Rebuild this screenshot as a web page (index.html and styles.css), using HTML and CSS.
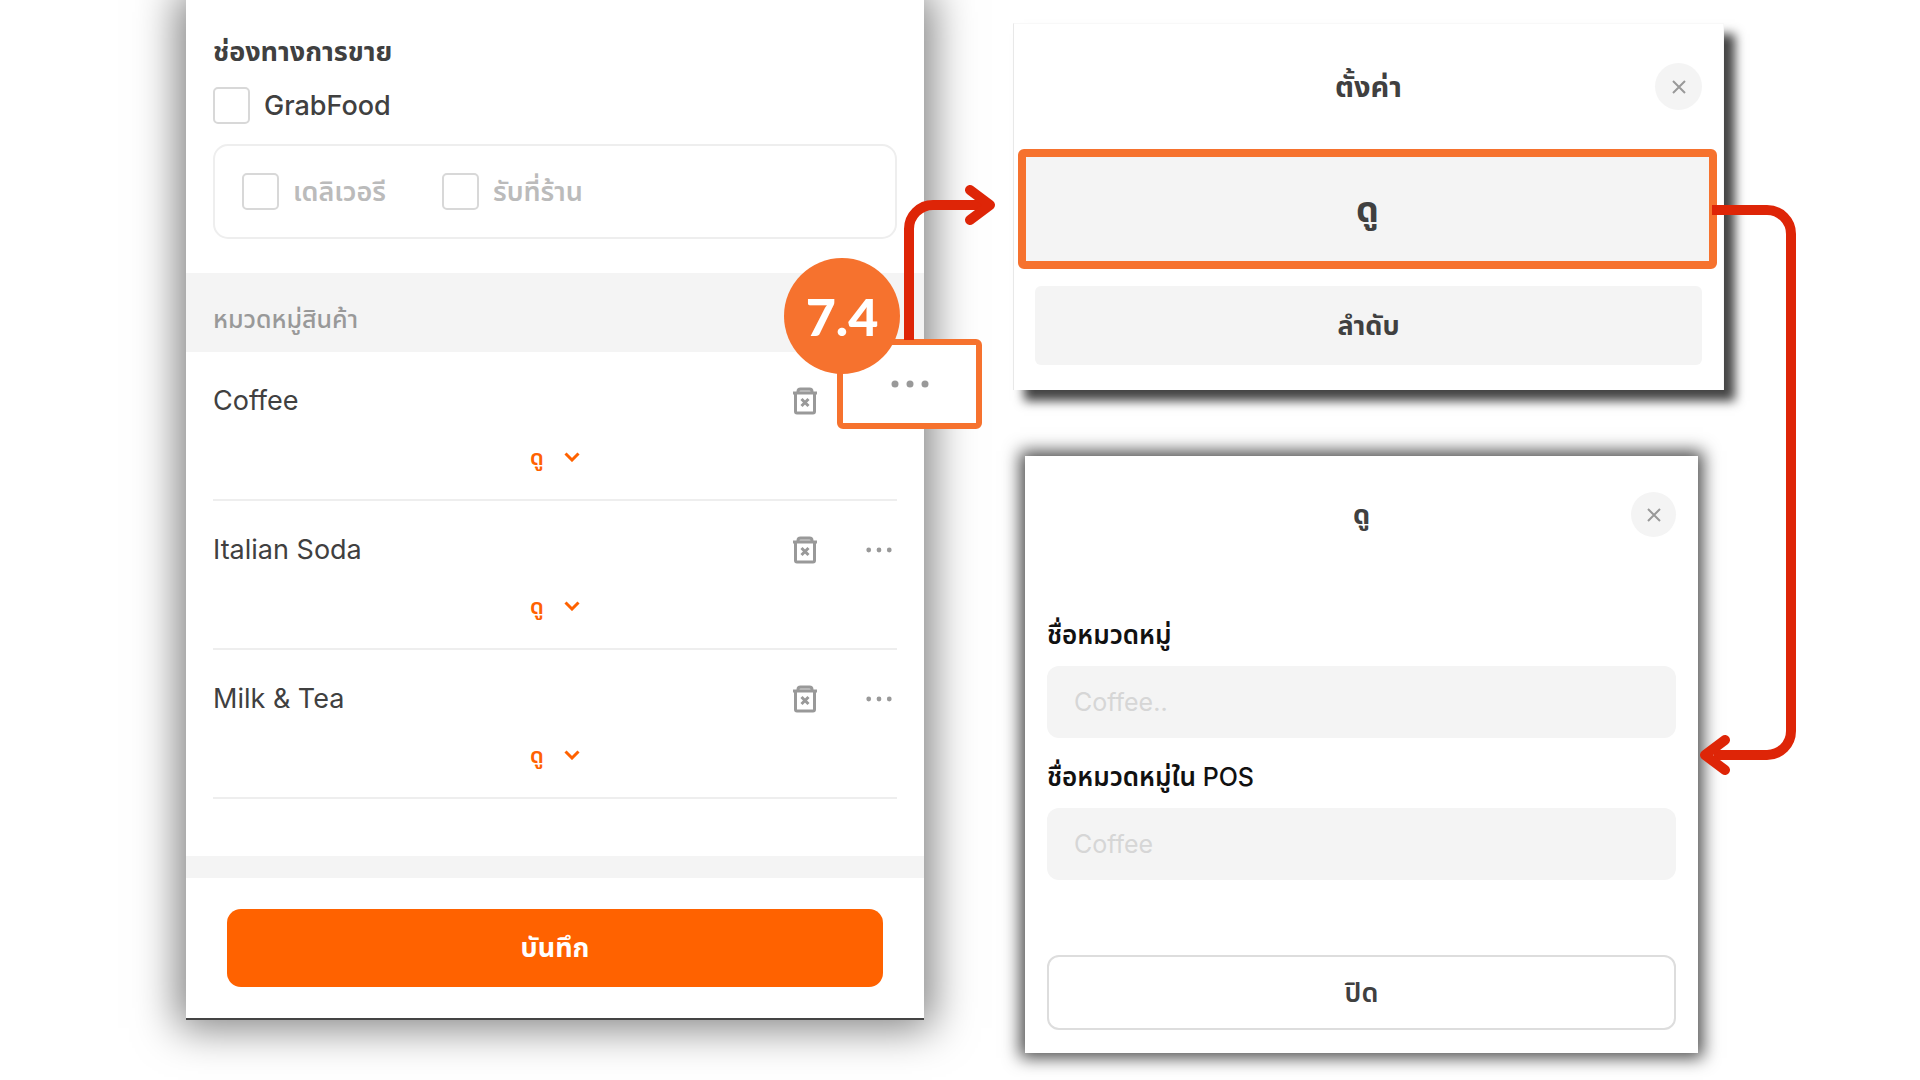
FILE: index.html
```html
<!DOCTYPE html>
<html lang="th">
<head>
<meta charset="utf-8">
<meta name="viewport" content="width=device-width, initial-scale=1">
<title>หมวดหมู่สินค้า</title>
<link rel="stylesheet" href="styles.css">
</head>
<body>
<svg class="sprite" aria-hidden="true">
  <symbol id="trash" viewBox="0 0 26 28">
    <path d="M6 6V4.500Q6 2 8.500 2H17.500Q20 2 20 4.500V6" fill="#d6d6d6"/>
    <path d="M1 6H25M3.500 6V24.500Q3.500 26 5 26H21Q22.500 26 22.500 24.500V6M9.500 12L16.500 19M16.500 12L9.500 19"/>
  </symbol>
  <symbol id="dots" viewBox="0 0 38 8"><circle cx="4" cy="4" r="3.500"/><circle cx="19" cy="4" r="3.500"/><circle cx="34" cy="4" r="3.500"/></symbol>
  <symbol id="chevron" viewBox="0 0 16 10"><path d="M1.500 1.500L8 8L14.500 1.500"/></symbol>
  <symbol id="close" viewBox="0 0 16 16"><path d="M2 2L14 14M14 2L2 14"/></symbol>
</svg>
<main class="board">
  <section class="card menu">
    <fieldset class="channels">
      <legend class="channels-title">ช่องทางการขาย</legend>
      <label class="check"><input type="checkbox">GrabFood</label>
      <div class="methods">
        <label class="check muted"><input type="checkbox">เดลิเวอรี</label>
        <label class="check muted"><input type="checkbox">รับที่ร้าน</label>
      </div>
    </fieldset>
    <h2 class="band">หมวดหมู่สินค้า</h2>
    <ul class="categories">
      <li class="category">
        <div class="category-head">
          <span class="name">Coffee</span>
          <button class="icon" aria-label="ลบ Coffee"><svg class="trash"><use href="#trash"/></svg></button>
          <span class="more-space"></span>
        </div>
        <button class="view">ดู<svg class="chevron"><use href="#chevron"/></svg></button>
        <button class="more-highlight" aria-label="ตัวเลือก Coffee"><svg class="dots large"><use href="#dots"/></svg></button>
        <svg class="arrow arrow-up" viewBox="0 0 96 156"><path class="shaft" d="M9 156V45A24 24 0 0 1 33 21H84"/><path d="M70 6L90 21L70 36"/></svg>
        <strong class="step">7.4</strong>
      </li>
      <li class="category">
        <div class="category-head">
          <span class="name">Italian Soda</span>
          <button class="icon" aria-label="ลบ Italian Soda"><svg class="trash"><use href="#trash"/></svg></button>
          <button class="icon more" aria-label="ตัวเลือก Italian Soda"><svg class="dots"><use href="#dots"/></svg></button>
        </div>
        <button class="view">ดู<svg class="chevron"><use href="#chevron"/></svg></button>
      </li>
      <li class="category">
        <div class="category-head">
          <span class="name">Milk &amp; Tea</span>
          <button class="icon" aria-label="ลบ Milk &amp; Tea"><svg class="trash"><use href="#trash"/></svg></button>
          <button class="icon more" aria-label="ตัวเลือก Milk &amp; Tea"><svg class="dots"><use href="#dots"/></svg></button>
        </div>
        <button class="view">ดู<svg class="chevron"><use href="#chevron"/></svg></button>
      </li>
    </ul>
    <div class="save-bar"><button class="save">บันทึก</button></div>
  </section>

  <div class="dialogs">
    <section class="card settings">
      <header class="dialog-head">
        <h2 class="dialog-title">ตั้งค่า</h2>
        <button class="close" aria-label="ปิด"><svg><use href="#close"/></svg></button>
      </header>
      <button class="option selected">ดู</button>
      <button class="option">ลำดับ</button>
    </section>
    <section class="card detail">
      <header class="dialog-head">
        <h2 class="dialog-title">ดู</h2>
        <button class="close small" aria-label="ปิด"><svg><use href="#close"/></svg></button>
      </header>
      <form class="fields">
        <label class="field-label" for="category-name">ชื่อหมวดหมู่</label>
        <input class="field" id="category-name" type="text" placeholder="Coffee..">
        <label class="field-label" for="pos-name">ชื่อหมวดหมู่ใน <span class="latin">POS</span></label>
        <input class="field" id="pos-name" type="text" placeholder="Coffee">
        <button class="dismiss" type="button">ปิด</button>
      </form>
    </section>
    <svg class="arrow arrow-down" viewBox="0 0 100 580"><path class="shaft" d="M14 10H69A24 24 0 0 1 93 34V531A24 24 0 0 1 69 555H16"/><path d="M27 540L7 555L27 570"/></svg>
  </div>
</main>
</body>
</html>
```
FILE: styles.css
```css
* { box-sizing: border-box; }
body {
  margin: 0;
  background: #fff;
  color: #404040;
  font-family: Inter, "Noto Sans Thai", "Noto Sans", sans-serif;
  font-size: 27px;
  line-height: 36px;
}
button, input { font: inherit; color: inherit; }
button { padding: 0; border: 0; background: none; cursor: pointer; }
h2 { margin: 0; font-size: 27px; line-height: 36px; }
svg { display: block; fill: none; stroke: currentColor; }
.sprite { position: absolute; width: 0; height: 0; }

.board {
  display: grid;
  grid-template-columns: 186fr 738fr 89fr 711fr 196fr;
  align-items: start;
  min-height: 100vh;
}
.card { background: #fff; }

/* Category list */
.menu {
  grid-column: 2;
  border-bottom: 2px solid #444;
  box-shadow: 0 0 40px 8px rgba(0, 0, 0, 0.5);
}
.channels {
  margin: 0;
  padding: 34px 27px;
  border: 0;
}
.channels-title { float: left; width: 100%; padding: 0; margin-bottom: 17px; font-weight: 700; }
.check { display: flex; align-items: center; gap: 14px; clear: both; font-weight: 500; }
.check input {
  appearance: none;
  width: 37px;
  height: 37px;
  margin: 0;
  border: 2px solid #d8d8d8;
  border-radius: 5px;
  background: #fff;
}
.methods {
  display: flex;
  gap: 56px;
  margin-top: 20px;
  padding: 27px;
  border: 2px solid #eee;
  border-radius: 15px;
}
.muted { color: #bbb; font-weight: 600; }
.band {
  padding: 28px 27px 15px;
  background: #f4f4f4;
  color: #999;
  font-size: 25px;
  font-weight: 500;
}
.categories { margin: 0; padding: 0 27px 57px; list-style: none; }
.category {
  position: relative;
  padding-top: 31px;
  border-bottom: 2px solid #eee;
}
.category-head { display: flex; align-items: center; }
.name { flex: 1; }
.icon { color: #999; }
.trash { width: 26px; height: 28px; stroke-width: 3; }
.more, .more-space { width: 36px; margin-left: 43px; }
.dots { width: 26px; height: 6px; margin: 0 auto; fill: #999; stroke: none; }
.dots.large { width: 38px; height: 8px; }
.view {
  display: flex;
  align-items: center;
  gap: 20px;
  height: 36px;
  margin: 20px auto 24px;
  color: #ff6200;
  font-size: 22px;
  font-weight: 600;
}
.chevron { width: 16px; height: 10px; stroke-width: 3; }
.save-bar { padding: 31px 41px; border-top: 22px solid #f4f4f4; }
.save {
  width: 100%;
  height: 78px;
  border-radius: 14px;
  background: #ff6200;
  color: #fff;
  font-weight: 700;
}

/* Callouts over the first category */
.more-highlight {
  position: absolute;
  top: -13px;
  right: -85px;
  width: 145px;
  height: 90px;
  border: 6px solid #f6722e;
  border-radius: 6px;
  background: #fff;
}
.step {
  position: absolute;
  top: -94px;
  right: -3px;
  width: 116px;
  height: 116px;
  border-radius: 50%;
  background: #f6722e;
  color: #fff;
  font-family: Lato, sans-serif;
  font-size: 52px;
  font-weight: 900;
  line-height: 116px;
  text-align: center;
}
.arrow {
  position: absolute;
  stroke: #de2507;
  stroke-width: 10;
  stroke-linecap: round;
  stroke-linejoin: round;
  pointer-events: none;
}
.shaft { stroke-linecap: butt; }
.arrow-up { top: -168px; right: -99px; width: 96px; height: 156px; }
.arrow-down { top: 200px; right: -74px; width: 100px; height: 580px; }

/* Dialogs */
.dialogs { position: relative; grid-column: 4; }
.settings {
  margin-top: 23px;
  padding-bottom: 25px;
  border: 1px solid #f8f8f8;
  border-bottom: 0;
  border-left-color: #e8e8e8;
  box-shadow: 11px 11px 10px 0 #444;
}
.dialog-head { display: grid; grid-template-columns: 1fr auto 1fr; align-items: center; padding: 39px 21px; }
.dialog-title { grid-column: 2; }
.settings .dialog-title { font-size: 29px; }
.close {
  grid-column: 3;
  justify-self: end;
  display: grid;
  place-items: center;
  width: 47px;
  height: 47px;
  border-radius: 50%;
  background: #f4f4f4;
  color: #999;
}
.close svg { width: 16px; height: 16px; stroke-width: 2; }
.close.small { width: 45px; height: 45px; }
.option {
  display: block;
  width: calc(100% - 42px);
  height: 79px;
  margin: 0 auto;
  border-radius: 6px;
  background: #f4f4f4;
  font-weight: 700;
}
.option.selected {
  width: calc(100% - 10px);
  height: 120px;
  margin: 0 6px 17px 4px;
  border: 8px solid #f6722e;
  font-size: 36px;
}
.detail {
  margin: 66px 26px 27px 12px;
  box-shadow: 0 0 16px 5px rgba(0, 0, 0, 0.7);
}
.detail .dialog-head { padding: 36px 22px; }
.fields { display: flex; flex-direction: column; padding: 44px 22px 23px; }
.field-label { margin-bottom: 13px; color: #111; font-size: 26px; font-weight: 600; }
.latin { font-size: 25px; font-weight: 500; }
.field {
  height: 72px;
  margin-bottom: 21px;
  padding: 0 27px;
  border: 0;
  border-radius: 12px;
  background: #f4f4f4;
  font-size: 25px;
}
.field::placeholder { color: #d6d6d6; opacity: 1; }
.dismiss {
  height: 75px;
  margin-top: 54px;
  border: 2px solid #ddd;
  border-radius: 12px;
  font-weight: 600;
}
```
